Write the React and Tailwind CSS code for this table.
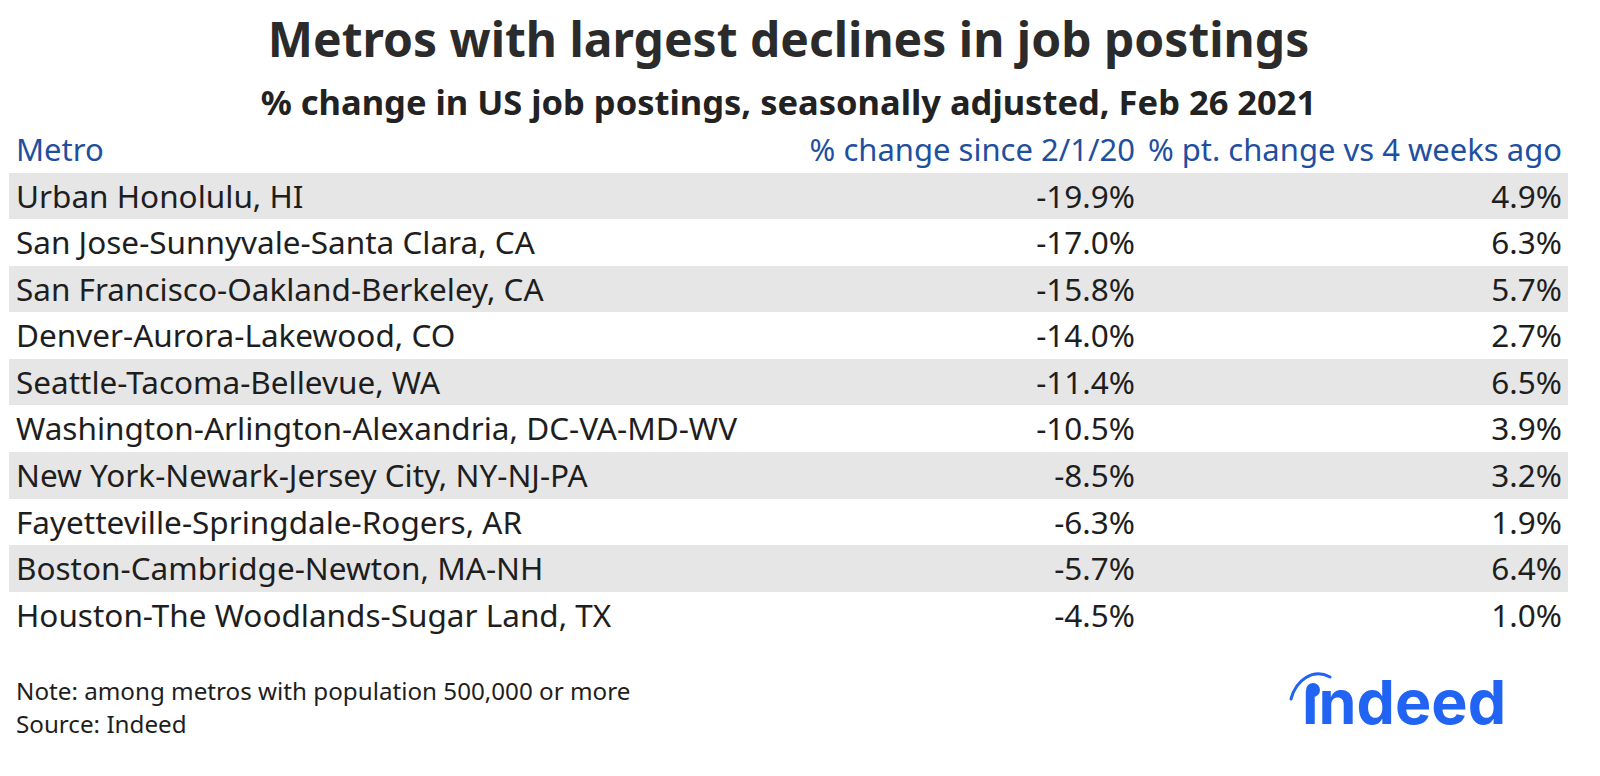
import React from "react";

const rows = [
  ["Urban Honolulu, HI", "-19.9%", "4.9%"],
  ["San Jose-Sunnyvale-Santa Clara, CA", "-17.0%", "6.3%"],
  ["San Francisco-Oakland-Berkeley, CA", "-15.8%", "5.7%"],
  ["Denver-Aurora-Lakewood, CO", "-14.0%", "2.7%"],
  ["Seattle-Tacoma-Bellevue, WA", "-11.4%", "6.5%"],
  ["Washington-Arlington-Alexandria, DC-VA-MD-WV", "-10.5%", "3.9%"],
  ["New York-Newark-Jersey City, NY-NJ-PA", "-8.5%", "3.2%"],
  ["Fayetteville-Springdale-Rogers, AR", "-6.3%", "1.9%"],
  ["Boston-Cambridge-Newton, MA-NH", "-5.7%", "6.4%"],
  ["Houston-The Woodlands-Sugar Land, TX", "-4.5%", "1.0%"],
];

function IndeedLogo() {
  return (
    <div className="relative h-[64px] w-[220px]">
      <svg
        className="absolute left-0 top-0"
        width="60"
        height="60"
        viewBox="0 0 60 60"
      >
        <path
          d="M3 31 C 8 12, 25 0, 42 9"
          fill="none"
          stroke="#2164f3"
          strokeWidth="3"
          strokeLinecap="round"
        />
        <circle cx="25" cy="22" r="7" fill="#2164f3" />
      </svg>
      <span className="absolute left-[14px] top-[4px] whitespace-nowrap font-['Inter',sans-serif] text-[61px] font-bold leading-[60px] text-[#2164f3]">
        ındeed
      </span>
    </div>
  );
}

export default function App() {
  return (
    <div className="h-[776px] w-[1600px] overflow-hidden bg-white font-['Noto_Sans',sans-serif]">
      <div className="ml-[9px] w-[1559px] pt-[6px]">
        <h1 className="text-center text-[48px] font-bold leading-[66px] text-[#2b2b2b]">
          Metros with largest declines in job postings
        </h1>
        <h2 className="mt-[9px] whitespace-nowrap text-center text-[34.5px] font-bold leading-[42px] text-[#222222]">
          % change in US job postings, seasonally adjusted, Feb 26 2021
        </h2>
        <div className="mt-[3px] grid grid-cols-[754px_378px_427px] text-[31px] leading-[46.57px] text-[#1f4fa0]">
          <div className="pl-[7px]">Metro</div>
          <div className="whitespace-nowrap pr-[6px] text-right">% change since 2/1/20</div>
          <div className="whitespace-nowrap pr-[6px] text-right">% pt. change vs 4 weeks ago</div>
        </div>
        <div className="flex flex-col">
          {rows.map((r, i) => (
            <div
              key={r[0]}
              className={
                "grid h-[46.57px] grid-cols-[754px_378px_427px] text-[31.5px] leading-[46.57px] text-[#1e1e1e] " +
                (i % 2 === 0 ? "bg-[#e6e6e6]" : "bg-white")
              }
            >
              <div className="whitespace-nowrap pl-[7px]">{r[0]}</div>
              <div className="pr-[6px] text-right">{r[1]}</div>
              <div className="pr-[6px] text-right">{r[2]}</div>
            </div>
          ))}
        </div>
        <div className="mt-[36px] flex items-start justify-between">
          <div className="pl-[7px] text-[24.2px] leading-[33px] text-[#1e1e1e]">
            <div>Note: among metros with population 500,000 or more</div>
            <div>Source: Indeed</div>
          </div>
          <div className="mr-[60px] mt-[-6px]">
            <IndeedLogo />
          </div>
        </div>
      </div>
    </div>
  );
}
